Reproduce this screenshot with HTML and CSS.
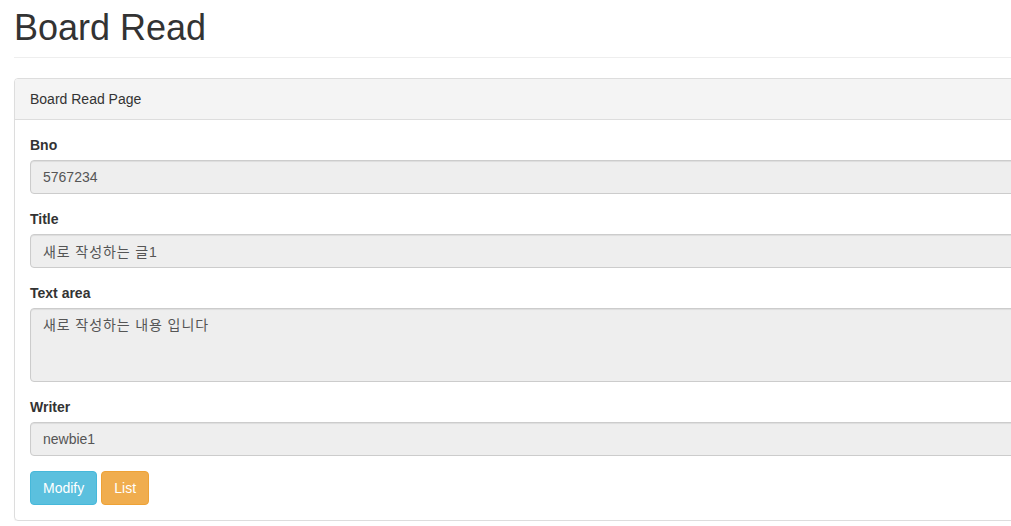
FILE: index.html
```html
<!DOCTYPE html>
<html lang="ko">
<head>
<meta charset="utf-8">
<title>Board Read</title>
<link rel="stylesheet" href="styles.css">
</head>
<body>
<div class="container">
  <div class="page-header">
    <h1>Board Read</h1>
  </div>
  <div class="panel">
    <div class="panel-heading">Board Read Page</div>
    <div class="panel-body">
      <div class="form-group">
        <label>Bno</label>
        <input class="form-control" value="5767234" readonly>
      </div>
      <div class="form-group">
        <label>Title</label>
        <input class="form-control ko" value="새로 작성하는 글1" readonly>
      </div>
      <div class="form-group">
        <label>Text area</label>
        <textarea class="form-control ko" rows="3" readonly>새로 작성하는 내용 입니다</textarea>
      </div>
      <div class="form-group">
        <label>Writer</label>
        <input class="form-control" value="newbie1" readonly>
      </div>
      <div class="actions">
        <button class="btn btn-info">Modify</button>
        <button class="btn btn-warning">List</button>
      </div>
    </div>
  </div>
</div>
</body>
</html>
```

FILE: styles.css
```css
html {
  overflow: hidden;
}
* {
  box-sizing: border-box;
}
body {
  margin: 0;
  font-family: "Liberation Sans", Arial, "Noto Sans CJK KR", sans-serif;
  font-size: 14px;
  line-height: 20px;
  color: #333;
  background: #fff;
}
.container {
  width: 1200px;
  padding: 8px 0 0 14px;
}
.page-header {
  padding-bottom: 9px;
  margin-bottom: 20px;
  border-bottom: 1px solid #eee;
}
.page-header h1 {
  margin: 0;
  font-size: 36px;
  font-weight: 500;
  line-height: 1.1;
}
.panel {
  border: 1px solid #ddd;
  border-radius: 4px;
  box-shadow: 0 1px 1px rgba(0,0,0,.05);
}
.panel-heading {
  padding: 10px 15px;
  background: #f4f4f4;
  border-bottom: 1px solid #ddd;
  border-radius: 3px 3px 0 0;
}
.panel-body {
  padding: 15px;
}
.form-group {
  margin-bottom: 15px;
}
.form-group label {
  display: block;
  font-weight: bold;
  margin-bottom: 5px;
}
.form-control {
  display: block;
  width: 100%;
  height: 34px;
  padding: 6px 12px;
  font: inherit;
  font-size: 14px;
  line-height: 20px;
  color: #555;
  background: #eee;
  border: 1px solid #ccc;
  border-radius: 4px;
  box-shadow: inset 0 1px 1px rgba(0,0,0,.075);
  margin: 0;
}
.form-control.ko {
  letter-spacing: 0.9px;
}
textarea.form-control {
  height: 74px;
  resize: none;
}
.actions {
  display: flex;
  gap: 4px;
}
.btn {
  height: 34px;
  padding: 6px 12px;
  font: inherit;
  font-size: 14px;
  line-height: 20px;
  color: #fff;
  border: 1px solid transparent;
  border-radius: 4px;
  cursor: pointer;
}
.btn-info {
  background: #5bc0de;
  border-color: #46b8da;
}
.btn-warning {
  background: #f0ad4e;
  border-color: #eea236;
}
```
